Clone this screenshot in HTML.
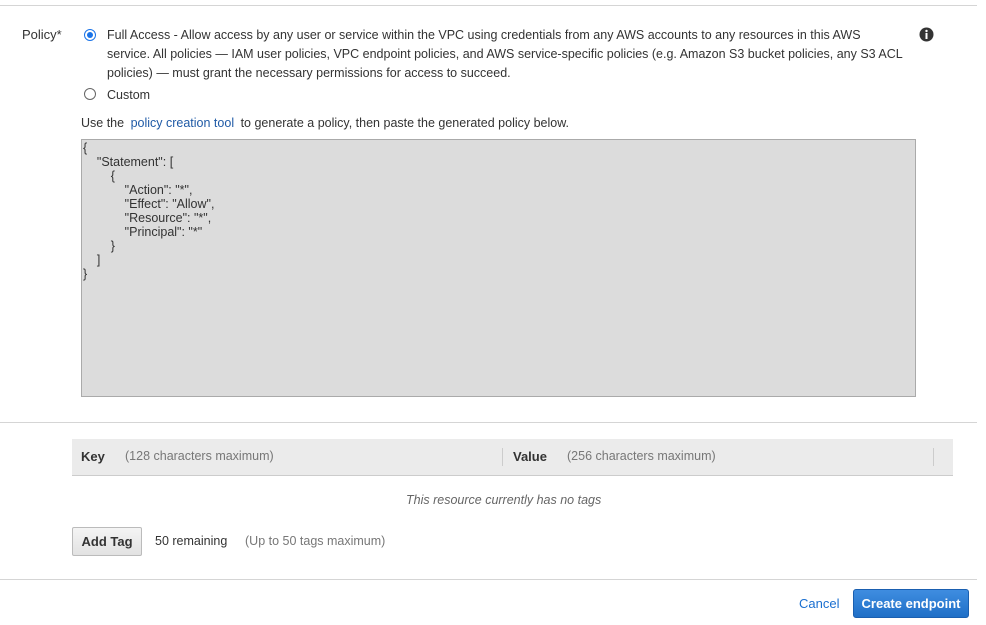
<!DOCTYPE html>
<html><head><style>
body{margin:0;width:986px;height:625px;background:#fff;font-family:"Liberation Sans",Arial,sans-serif;font-size:13px;color:#333;position:relative;overflow:hidden}
.a{position:absolute;white-space:nowrap}
.hr{position:absolute;left:0;width:977px;height:1px;background:#d5d5d5}
.radio{position:absolute;width:10px;height:10px;border:1px solid #666;border-radius:50%;background:#fff}
</style></head><body>
<div class="hr" style="top:5px"></div>
<div class="a" style="left:22px;top:27px;font-size:13px;color:#333">Policy*</div>
<div class="radio" style="left:84px;top:29px;border-color:#1a73e8"><div style="position:absolute;left:2px;top:2px;width:6px;height:6px;border-radius:50%;background:#1a73e8"></div></div>
<div class="a" style="left:107px;top:26px;line-height:19px;font-size:12.5px">Full Access - Allow access by any user or service within the VPC using credentials from any AWS accounts to any resources in this AWS<br>service. All policies — IAM user policies, VPC endpoint policies, and AWS service-specific policies (e.g. Amazon S3 bucket policies, any S3 ACL<br>policies) — must grant the necessary permissions for access to succeed.</div>
<svg class="a" style="left:919px;top:27px" width="15" height="15" viewBox="0 0 15 15"><circle cx="7.5" cy="7.5" r="7" fill="#333"/><rect x="6.5" y="6" width="2" height="6" fill="#fff"/><circle cx="7.5" cy="4" r="1.2" fill="#fff"/></svg>
<div class="radio" style="left:84px;top:88px"></div>
<div class="a" style="left:107px;top:88px;font-size:12.5px">Custom</div>
<div class="a" style="left:81px;top:116px;font-size:12.5px">Use the <span style="color:#1f5aa6;margin:0 3px">policy creation tool</span> to generate a policy, then paste the generated policy below.</div>
<div class="a" style="left:81px;top:139px;width:833px;height:256px;background:#dcdcdc;border:1px solid #aaa"></div>
<pre class="a" style="left:83px;top:141px;margin:0;white-space:pre;font-family:'Liberation Sans',Arial,sans-serif;font-size:12.5px;line-height:14px;color:#333">{
    "Statement": [
        {
            "Action": "*",
            "Effect": "Allow",
            "Resource": "*",
            "Principal": "*"
        }
    ]
}</pre>
<div class="hr" style="top:422px"></div>
<div class="a" style="left:72px;top:439px;width:881px;height:36px;background:#ebebeb;border-bottom:1px solid #ccc"></div>
<div class="a" style="left:81px;top:449px;font-weight:bold">Key</div>
<div class="a" style="left:125px;top:449px;color:#777;font-size:12.5px">(128 characters maximum)</div>
<div class="a" style="left:502px;top:448px;width:1px;height:18px;background:#ccc"></div>
<div class="a" style="left:933px;top:448px;width:1px;height:18px;background:#ccc"></div>
<div class="a" style="left:513px;top:449px;font-weight:bold">Value</div>
<div class="a" style="left:567px;top:449px;color:#777;font-size:12.5px">(256 characters maximum)</div>
<div class="a" style="left:406px;top:493px;color:#666;font-style:italic;font-size:12.5px">This resource currently has no tags</div>
<div class="a" style="left:72px;top:527px;width:68px;height:27px;background:linear-gradient(#f4f4f4,#e2e2e2);border:1px solid #bbb;border-radius:2px;text-align:center;line-height:27px;font-weight:bold;color:#333">Add Tag</div>
<div class="a" style="left:155px;top:534px;font-size:12.5px">50 remaining</div>
<div class="a" style="left:245px;top:534px;color:#777;font-size:12.5px">(Up to 50 tags maximum)</div>
<div class="hr" style="top:579px"></div>
<div class="a" style="left:799px;top:596px;color:#1a6fd0">Cancel</div>
<div class="a" style="left:853px;top:589px;width:114px;height:27px;background:linear-gradient(#3f8de0,#1f6fc7);border:1px solid #1a5fb0;border-radius:3px;color:#fff;font-weight:bold;text-align:center;line-height:27px">Create endpoint</div>
</body></html>
